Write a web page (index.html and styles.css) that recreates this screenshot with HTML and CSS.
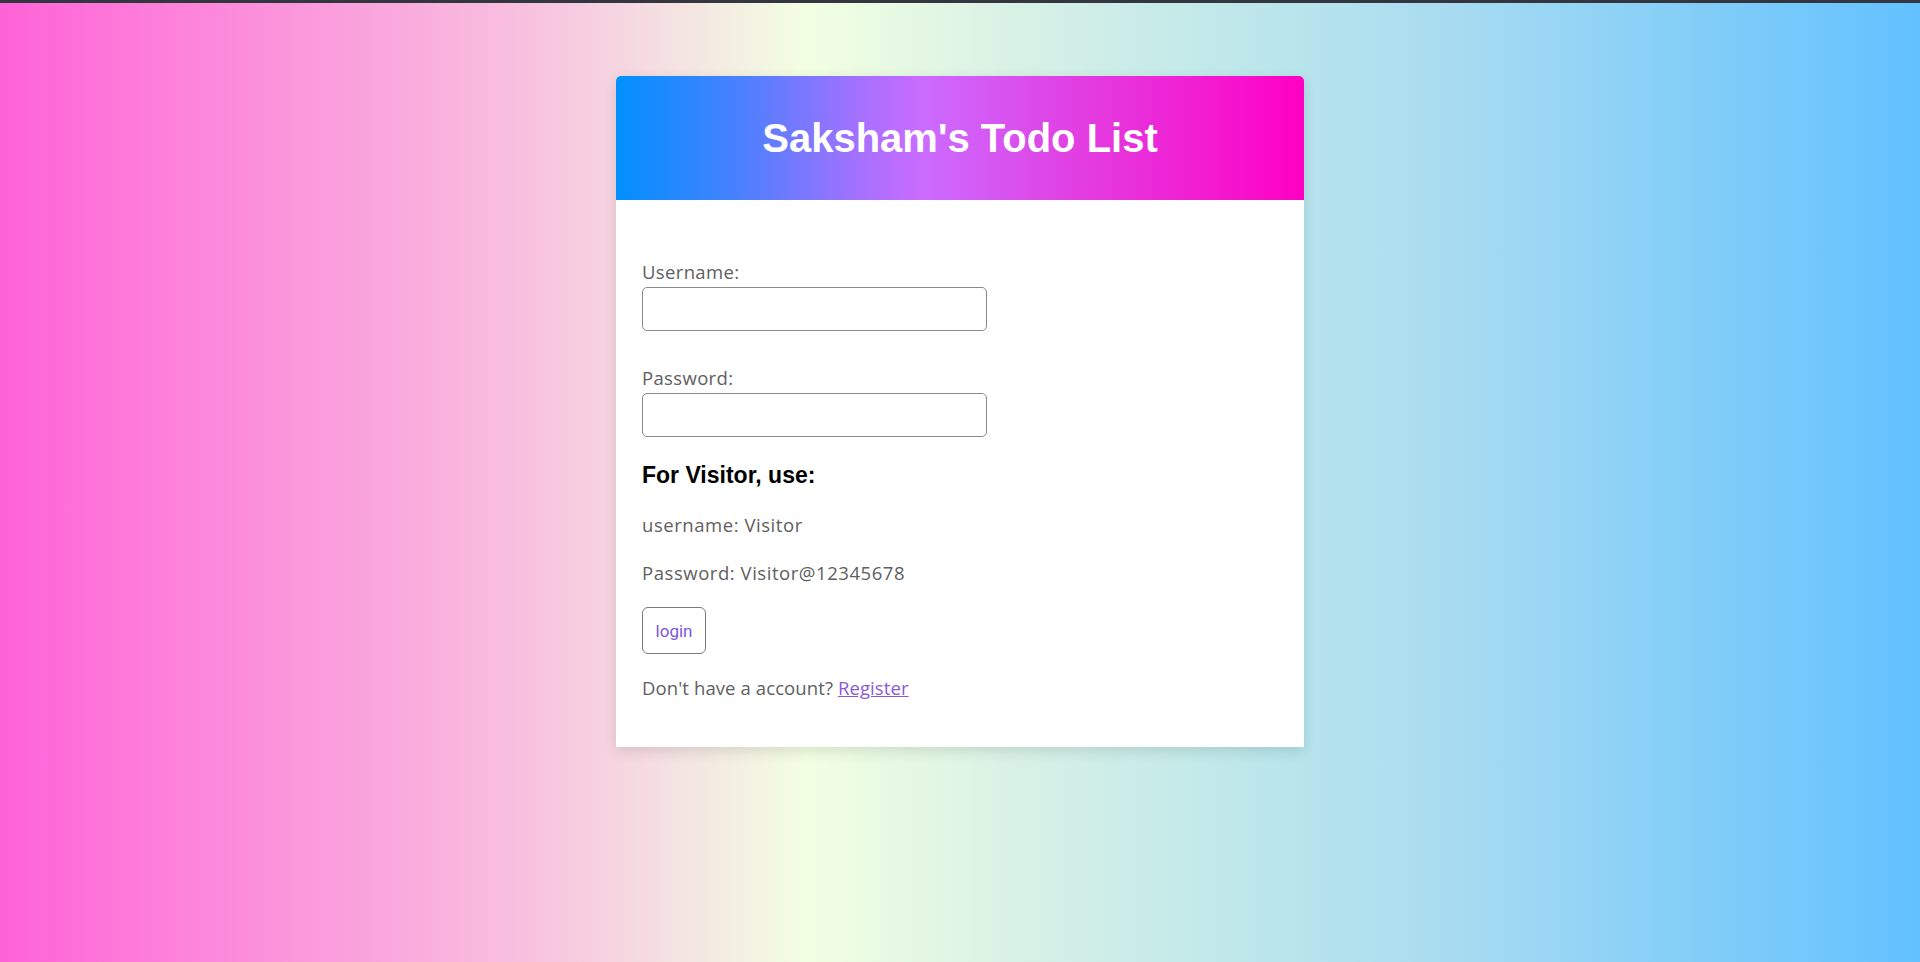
FILE: index.html
```html
<!DOCTYPE html>
<html lang="en">
<head>
<meta charset="utf-8">
<title>Saksham's Todo List</title>
<link rel="stylesheet" href="styles.css">
</head>
<body>
<div class="topbar"></div>
<main class="page">
  <section class="card">
    <header class="card-head">
      <h1 class="title">Saksham's Todo List</h1>
    </header>
    <form class="card-body">
      <label class="field-label" for="username">Username:</label>
      <input class="field" id="username" type="text">
      <label class="field-label second" for="password">Password:</label>
      <input class="field" id="password" type="password">
      <h3 class="visitor-title">For Visitor, use:</h3>
      <p class="info">username: Visitor</p>
      <p class="info second-info">Password: Visitor@12345678</p>
      <button class="login-btn" type="button">login</button>
      <p class="info register">Don't have a account? <a href="#" class="link">Register</a></p>
    </form>
  </section>
</main>
</body>
</html>
```
FILE: styles.css
```css
html, body {
  margin: 0;
  padding: 0;
  height: 100%;
}
body {
  background: linear-gradient(to right, #ff62d8 0%, #fb99dc 16%, #f8c3df 28%, #f4e2e2 35%, #f2ffe2 42%, #d6f0e6 54%, #bfe8ea 64%, #aadcf0 75%, #8cd1f6 85%, #62c1ff 100%);
  font-family: "Open Sans", "Noto Sans", sans-serif;
  overflow: hidden;
}
.topbar {
  height: 3px;
  background: #34363f;
}
.page {
  display: flex;
  justify-content: center;
  padding-top: 73px;
}
.card {
  width: 688px;
  background: #fff;
  border-radius: 5px 5px 0 0;
  box-shadow: 0 4px 14px rgba(0, 0, 0, 0.12);
}
.card-head {
  height: 124px;
  display: flex;
  align-items: center;
  justify-content: center;
  border-radius: 5px 5px 0 0;
  background: linear-gradient(to right, #0090ff 0%, #4a80ff 18%, #a870ff 36%, #cc6bff 45%, #e042e4 65%, #ff00c3 100%);
}
.title {
  margin: 0;
  color: #fff;
  font-family: "Liberation Sans", Arial, sans-serif;
  font-weight: bold;
  font-size: 40px;
}
.card-body {
  display: flex;
  flex-direction: column;
  align-items: flex-start;
  padding: 60px 26px 47px;
}
.field-label {
  font-size: 18.5px;
  letter-spacing: 0.35px;
  line-height: 24px;
  color: #606060;
  font-weight: 400;
}
.field-label.second {
  margin-top: 35px;
}
.field {
  margin-top: 3px;
  width: 345px;
  height: 44px;
  box-sizing: border-box;
  border: 1px solid #8a8a8a;
  border-radius: 5px;
  background: #fff;
}
.visitor-title {
  margin: 26px 0 0;
  font-family: "Liberation Sans", Arial, sans-serif;
  font-size: 23px;
  line-height: 25px;
  font-weight: bold;
  color: #000;
}
.info {
  margin: 25px 0 0;
  font-size: 18.5px;
  letter-spacing: 0.55px;
  line-height: 24px;
  color: #606060;
  font-weight: 400;
}
.second-info {
  margin-top: 24px;
}
.login-btn {
  margin-top: 22px;
  width: 64px;
  height: 47px;
  background: #fff;
  border: 1px solid #7a7a7a;
  border-radius: 6px;
  font-family: "Roboto", "Liberation Sans", sans-serif;
  font-size: 17px;
  color: #7a58e0;
  padding: 0;
}
.register {
  margin-top: 22px;
  letter-spacing: 0.1px;
}
.link {
  color: #8a5bd6;
  text-decoration: underline;
}
```
